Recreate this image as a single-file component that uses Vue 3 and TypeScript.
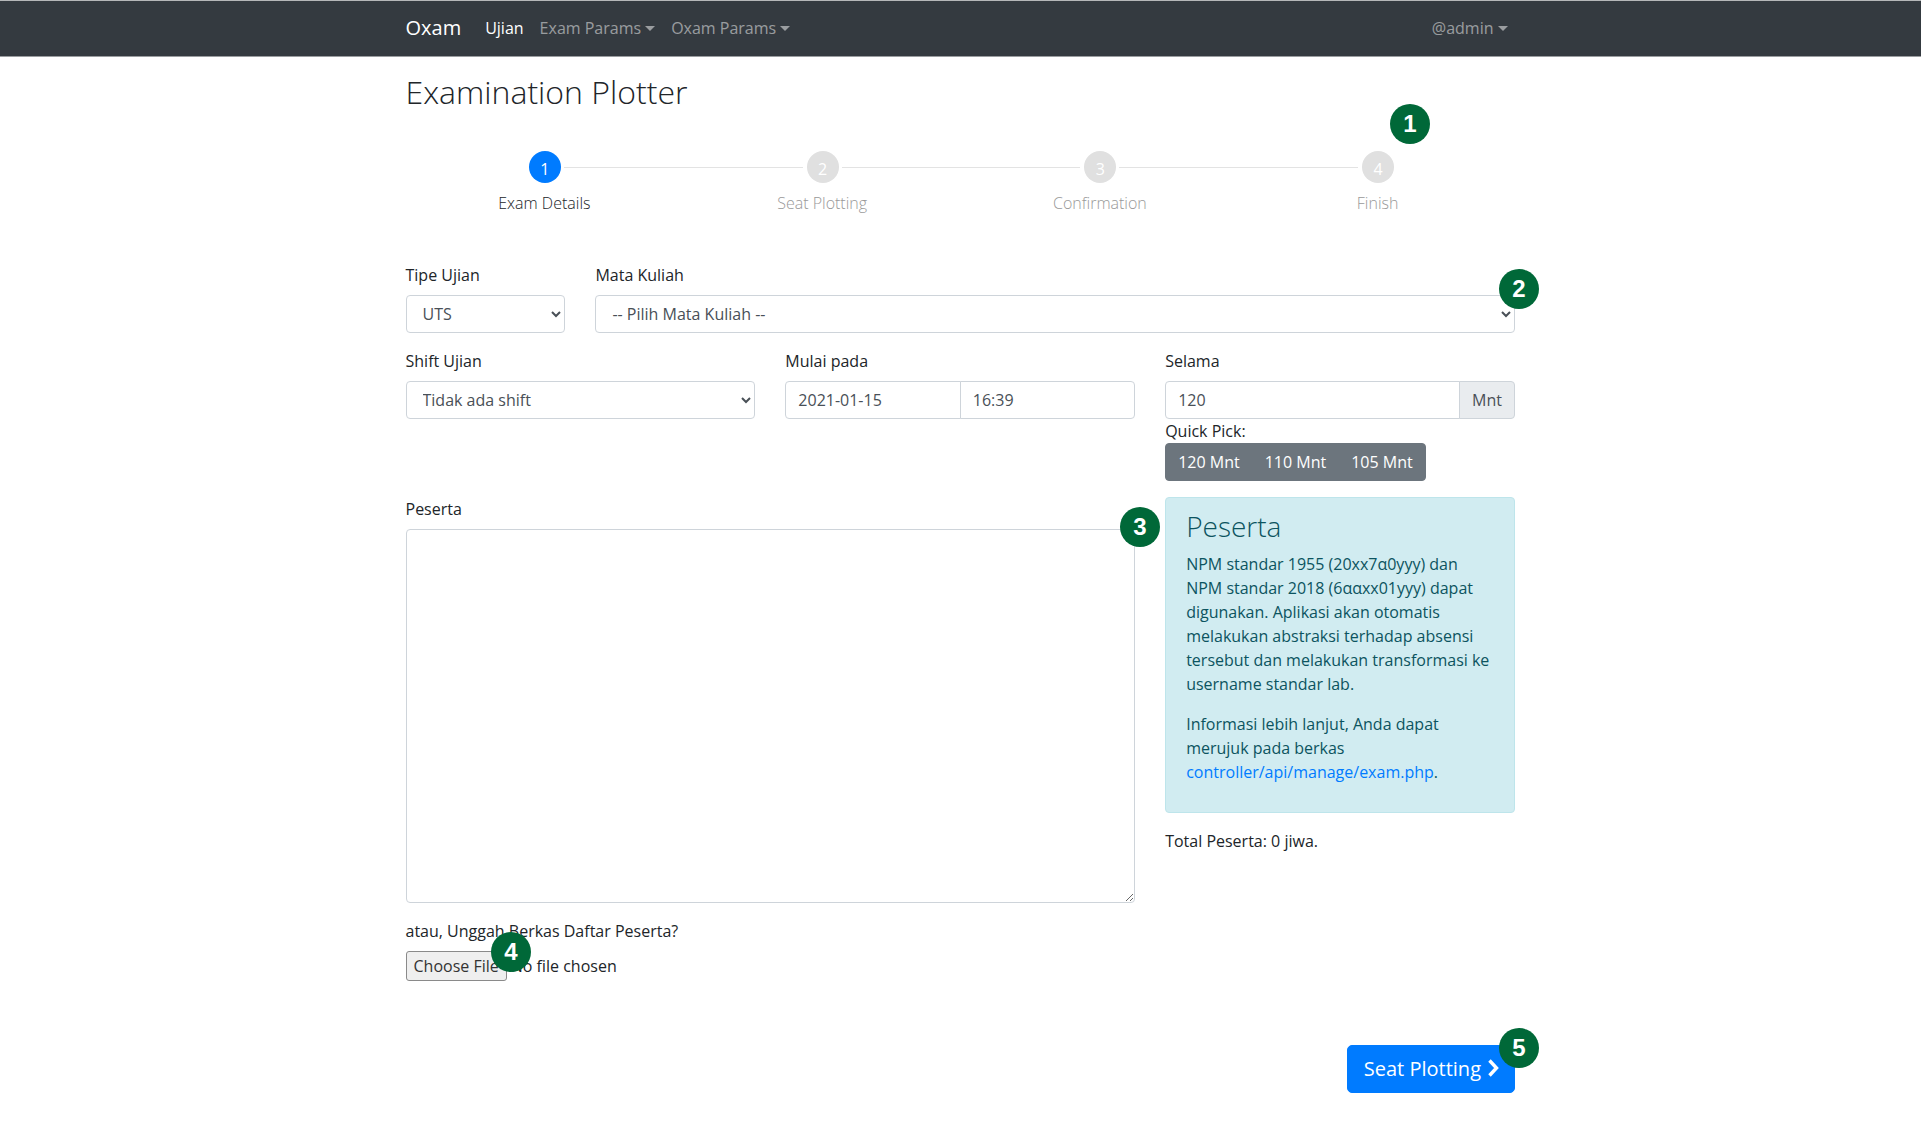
<script setup lang="ts">
const steps = [
  { n: 1, label: 'Exam Details', active: true },
  { n: 2, label: 'Seat Plotting', active: false },
  { n: 3, label: 'Confirmation', active: false },
  { n: 4, label: 'Finish', active: false },
]
const picks = ['120 Mnt', '110 Mnt', '105 Mnt']
const markers = [
  { n: 1, cls: 'm1' },
  { n: 2, cls: 'm2' },
  { n: 3, cls: 'm3' },
  { n: 4, cls: 'm4' },
  { n: 5, cls: 'm5' },
]
</script>

<template>
  <div class="page">
    <nav class="navbar">
      <div class="nav-inner">
        <a class="brand">Oxam</a>
        <a class="nav-link on">Ujian</a>
        <a class="nav-link caret">Exam Params</a>
        <a class="nav-link caret">Oxam Params</a>
        <a class="nav-link caret user">@admin</a>
      </div>
    </nav>

    <main class="container">
      <h2 class="title">Examination Plotter</h2>

      <div class="stepper">
        <div v-for="(s, i) in steps" :key="s.n" class="step" :class="{ active: s.active }">
          <div class="track">
            <span class="line before" :class="{ hide: i === 0 }"></span>
            <span class="dot">{{ s.n }}</span>
            <span class="line after" :class="{ hide: i === steps.length - 1 }"></span>
          </div>
          <div class="step-label">{{ s.label }}</div>
        </div>
      </div>

      <div class="grid">
        <div class="group s2">
          <label>Tipe Ujian</label>
          <select class="control"><option>UTS</option></select>
        </div>
        <div class="group s10">
          <label>Mata Kuliah</label>
          <select class="control"><option>-- Pilih Mata Kuliah --</option></select>
        </div>

        <div class="group s4">
          <label>Shift Ujian</label>
          <select class="control"><option>Tidak ada shift</option></select>
        </div>
        <div class="group s4">
          <label>Mulai pada</label>
          <div class="input-group">
            <input class="control" type="text" value="2021-01-15" />
            <input class="control joined" type="text" value="16:39" />
          </div>
        </div>
        <div class="group s4">
          <label>Selama</label>
          <div class="input-group">
            <input class="control flat-right" type="text" value="120" />
            <span class="append">Mnt</span>
          </div>
          <div class="quick-label">Quick Pick:</div>
          <div class="btn-group">
            <button v-for="p in picks" :key="p" class="pick" type="button">{{ p }}</button>
          </div>
        </div>

        <div class="s8">
          <div class="group">
            <label>Peserta</label>
            <textarea class="control area"></textarea>
          </div>
          <div class="group">
            <label>atau, Unggah Berkas Daftar Peserta?</label>
            <input class="file" type="file" />
          </div>
        </div>
        <div class="s4">
          <div class="alert">
            <h4>Peserta</h4>
            <p>NPM standar 1955 (20xx7α0yyy) dan NPM standar 2018 (6ααxx01yyy) dapat digunakan. Aplikasi akan otomatis melakukan abstraksi terhadap absensi tersebut dan melakukan transformasi ke username standar lab.</p>
            <p>Informasi lebih lanjut, Anda dapat merujuk pada berkas <a>controller/api/manage/exam.php</a>.</p>
          </div>
          <p class="total">Total Peserta: 0 jiwa.</p>
        </div>
      </div>

      <div class="actions">
        <button class="next" type="button">
          Seat Plotting
          <svg width="12" height="18" viewBox="0 0 12 18" aria-hidden="true">
            <path d="M2.5 1.5 9.5 9 2.5 16.5" fill="none" stroke="#fff" stroke-width="3.4" />
          </svg>
        </button>
      </div>
    </main>

    <span v-for="m in markers" :key="m.n" class="marker" :class="m.cls">{{ m.n }}</span>
  </div>
</template>

<style>
html, body { margin: 0; background: #fff; }
</style>

<style scoped>
.page {
  position: relative;
  min-height: 1141px;
  font-family: "Open Sans", "Liberation Sans", sans-serif;
  font-size: 16px;
  line-height: 24px;
  color: #212529;
}
.navbar {
  height: 57px;
  box-sizing: border-box;
  background: #343a40;
  border-top: 1px solid #b5b7b9;
  border-bottom: 1px solid #9a9da0;
}
.nav-inner {
  width: 1110px;
  margin: 0 auto;
  height: 100%;
  display: flex;
  align-items: center;
  position: relative;
  top: -1px;
}
.brand { color: #fff; font-size: 20px; margin-right: 16px; }
.nav-link { color: rgba(255, 255, 255, 0.5); padding: 0 8px; }
.nav-link.on { color: #fff; }
.caret::after {
  content: "";
  display: inline-block;
  margin-left: 4px;
  vertical-align: 3px;
  border-top: 5px solid;
  border-left: 5px solid transparent;
  border-right: 5px solid transparent;
}
.user { margin-left: auto; }

.container { width: 1109.5px; margin-left: 405.5px; padding-top: 16px; }
.title {
  margin: 0;
  font-size: 32px;
  font-weight: 300;
  line-height: 38px;
  color: #212529;
}
.stepper { display: flex; margin: 40px -1.5px 0 0; }
.step { flex: 1; text-align: center; color: #999; font-weight: 300; }
.step.active { color: #212529; }
.track { display: flex; align-items: center; }
.line { flex: 1; height: 1px; background: #e3e3e3; }
.line.before { margin-right: 4px; }
.line.after { margin-left: 3px; }
.line.hide { visibility: hidden; }
.dot {
  width: 32px;
  height: 32px;
  border-radius: 50%;
  background: #e0e0e0;
  color: #fff;
  font-size: 16px;
  line-height: 37px;
  font-weight: 400;
}
.active .dot { background: #007bff; }
.step-label { margin-top: 8px; }

.grid {
  margin-top: 48px;
  display: grid;
  grid-template-columns: repeat(12, 1fr);
  column-gap: 30px;
}
.s2 { grid-column: span 2; }
.s4 { grid-column: span 4; }
.s8 { grid-column: span 8; }
.s10 { grid-column: span 10; }
.group { margin-bottom: 16px; }
label { display: block; margin-bottom: 8px; }

.control {
  display: block;
  width: 100%;
  height: 38px;
  box-sizing: border-box;
  padding: 6px 12px;
  font-family: inherit;
  font-size: 16px;
  line-height: 24px;
  color: #495057;
  background: #fff;
  border: 1px solid #ced4da;
  border-radius: 4px;
}
.input-group { display: flex; }
.input-group .control { flex: 1; min-width: 0; border-radius: 4px 0 0 4px; }
.input-group .joined { margin-left: -1px; border-radius: 0 4px 4px 0; }
.input-group .flat-right { border-radius: 4px 0 0 4px; }
.append {
  margin-left: -1px;
  padding: 6px 12px;
  box-sizing: border-box;
  height: 38px;
  color: #495057;
  background: #e9ecef;
  border: 1px solid #ced4da;
  border-radius: 0 4px 4px 0;
}
.btn-group { display: inline-flex; vertical-align: top; }
.pick {
  height: 38px;
  padding: 6px 12px;
  font: inherit;
  color: #fff;
  background: #6c757d;
  border: 1px solid #6c757d;
  border-radius: 0;
  margin-left: -1px;
}
.pick:first-child { margin-left: 0; border-radius: 4px 0 0 4px; }
.pick:last-child { border-radius: 0 4px 4px 0; }
.area { height: 374px; resize: vertical; }
.file { display: block; font-family: inherit; font-size: 16px; line-height: 24px; }
.file::file-selector-button {
  height: 30px;
  padding: 1px 7px;
  margin-right: 4px;
  font: inherit;
  color: #333;
  background: #efefef;
  border: 1px solid #8a8a8a;
  border-radius: 3px;
}

.alert {
  box-sizing: border-box;
  padding: 12px 20px;
  color: #0c5460;
  background: #d1ecf1;
  border: 1px solid #bee5eb;
  border-radius: 4px;
  margin-bottom: 16px;
}
.alert h4 {
  margin: 0 0 8px;
  font-size: 28px;
  font-weight: 300;
  line-height: 33.6px;
}
.alert p { margin: 0 0 16px; }
.alert a { color: #007bff; }
.total { margin: 0; }

.actions { display: flex; justify-content: flex-end; margin-top: 48px; }
.next {
  height: 48px;
  box-sizing: border-box;
  padding: 6px 15px 8px 16px;
  display: flex;
  align-items: center;
  gap: 6px;
  font-family: inherit;
  font-size: 20px;
  color: #fff;
  background: #007bff;
  border: 1px solid #007bff;
  border-radius: 5px;
}

.marker {
  position: absolute;
  width: 40px;
  height: 40px;
  margin: -20px 0 0 -20px;
  border-radius: 50%;
  background: #006838;
  color: #fff;
  font-family: "Liberation Sans", Arial, sans-serif;
  font-size: 24px;
  font-weight: 700;
  line-height: 40px;
  text-align: center;
}
.m1 { left: 1410px; top: 124px; }
.m2 { left: 1519px; top: 289px; }
.m3 { left: 1140px; top: 527px; }
.m4 { left: 511px; top: 952px; }
.m5 { left: 1519px; top: 1048px; }
</style>
